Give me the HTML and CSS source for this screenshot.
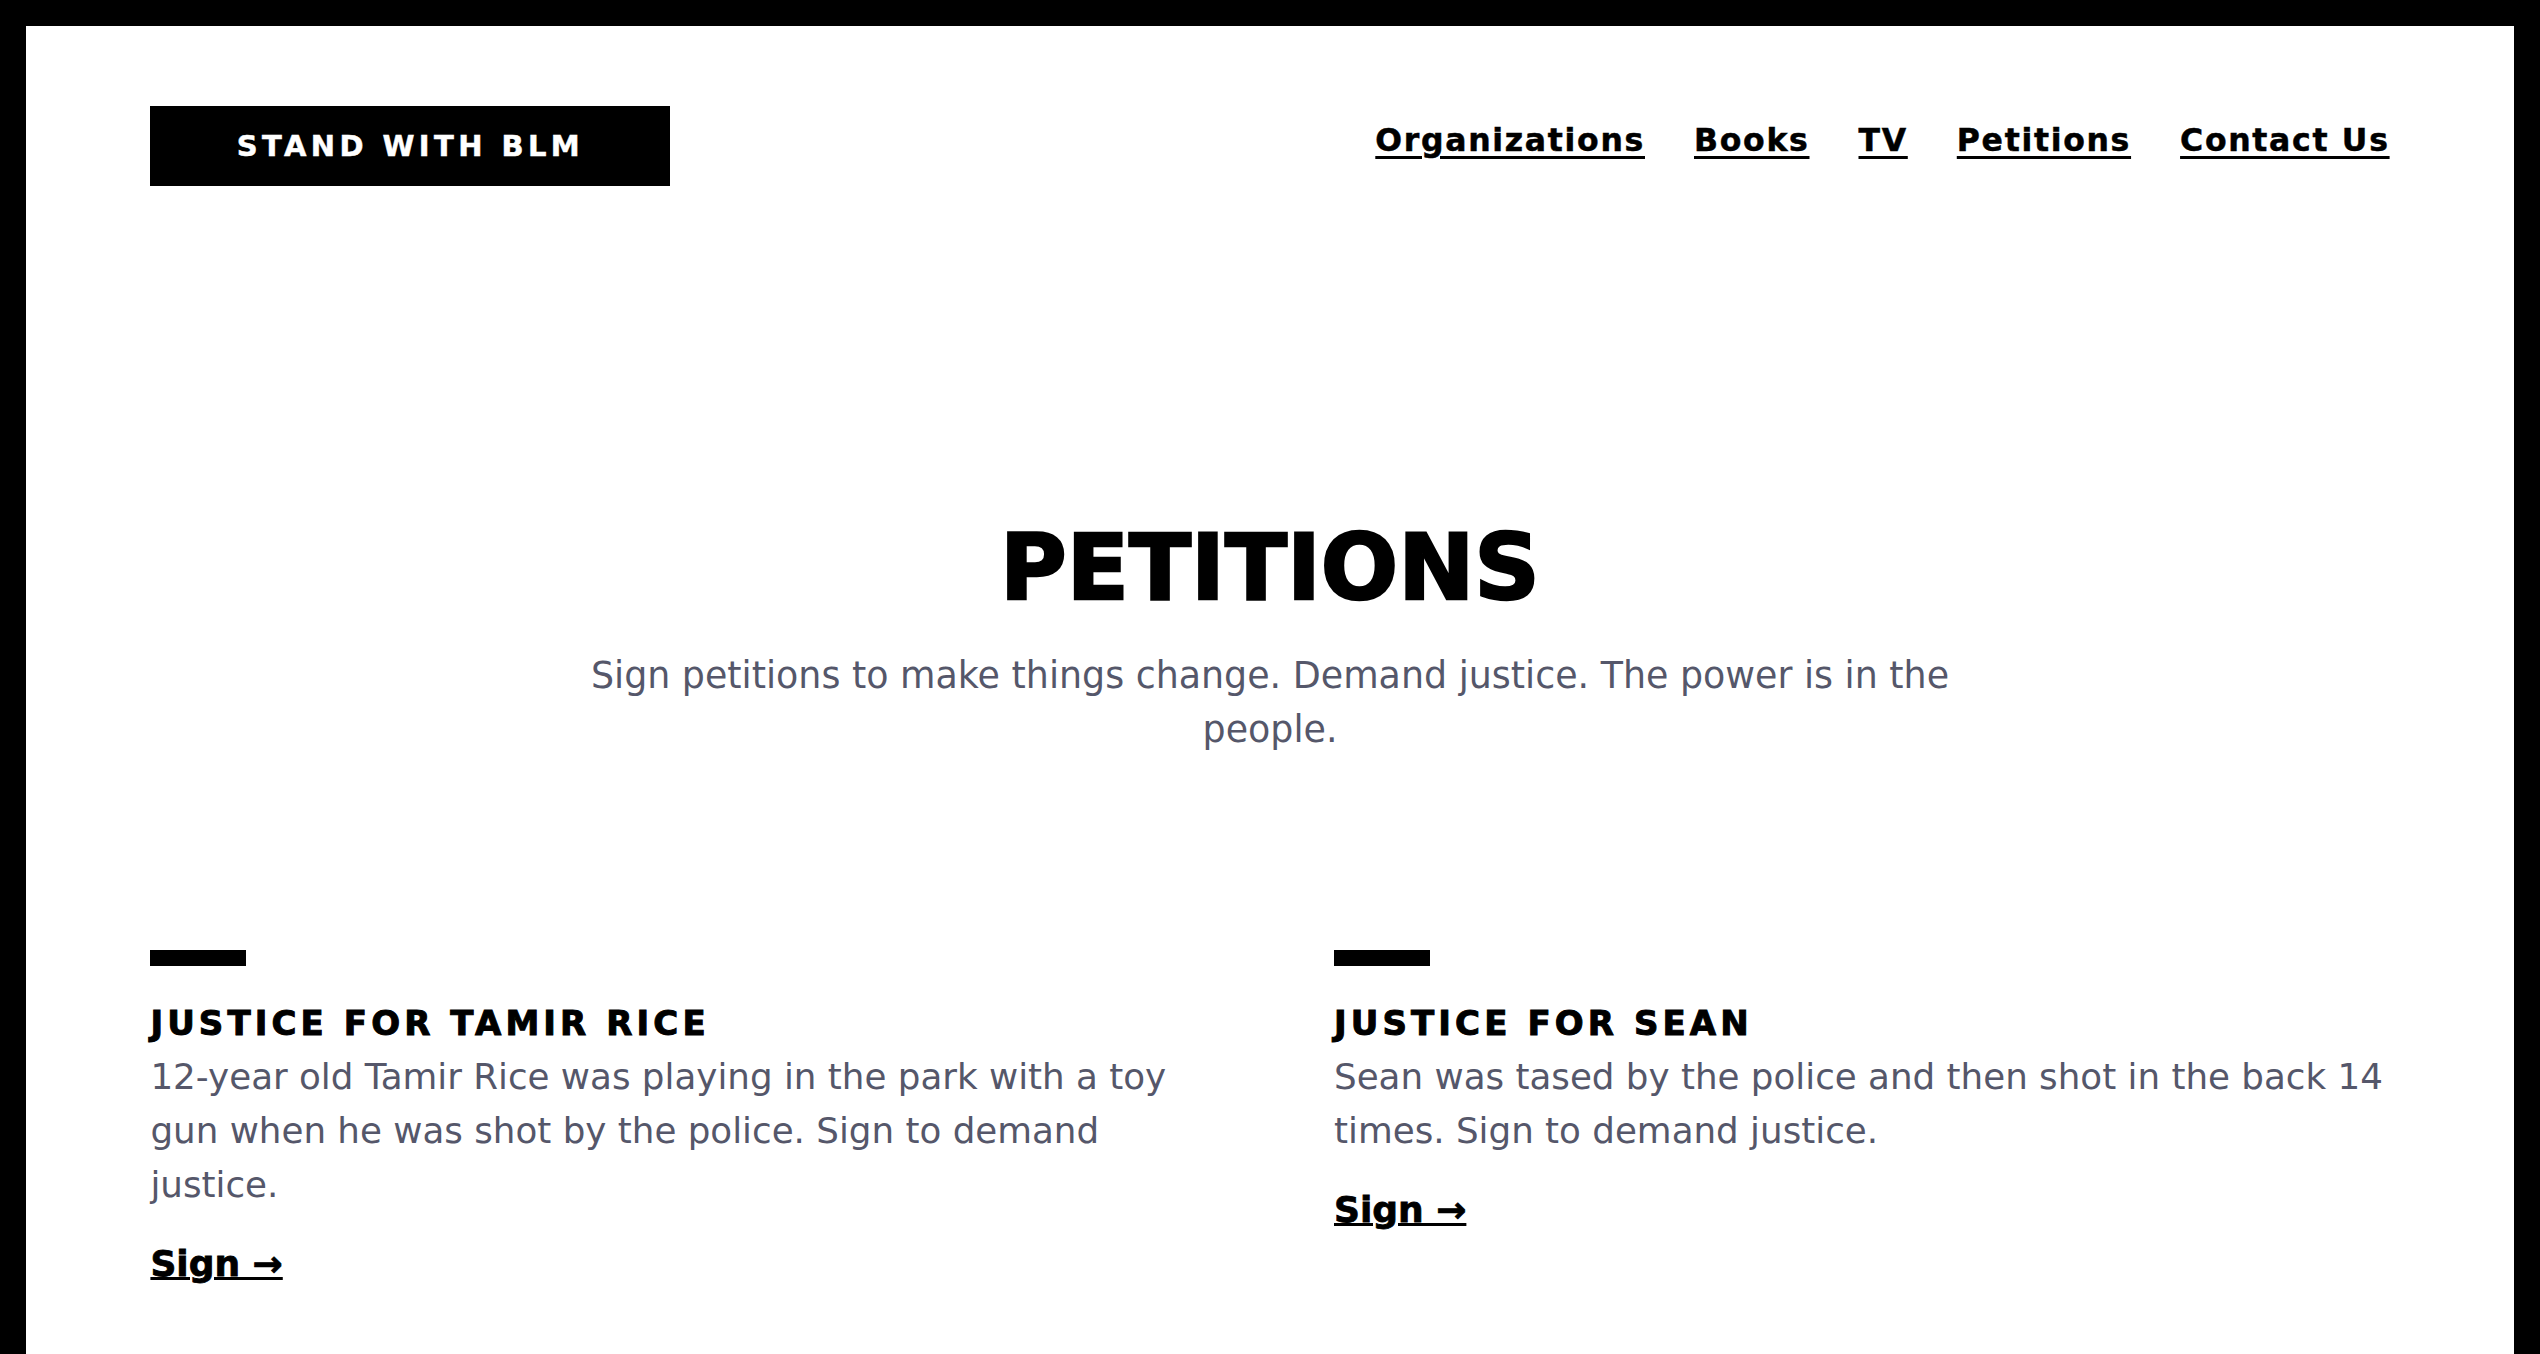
FILE: index.html
```html
<!DOCTYPE html>
<html lang="en">
<head>
<meta charset="utf-8">
<title>Petitions - Stand With BLM</title>
<link rel="stylesheet" href="styles.css">
</head>
<body>
  <div class="page">
    <header class="site-header">
      <a class="logo" href="#">STAND WITH BLM</a>
      <nav class="nav">
        <a href="#">Organizations</a>
        <a href="#">Books</a>
        <a href="#">TV</a>
        <a href="#">Petitions</a>
        <a href="#">Contact Us</a>
      </nav>
    </header>
    <main>
      <section class="hero">
        <h1 class="hero-title">PETITIONS</h1>
        <p class="hero-text">Sign petitions to make things change. Demand justice. The power is in the people.</p>
      </section>
      <section class="cards">
        <article class="card">
          <div class="card-bar"></div>
          <h2 class="card-title">JUSTICE FOR TAMIR RICE</h2>
          <p class="card-text">12-year old Tamir Rice was playing in the park with a toy gun when he was shot by the police. Sign to demand justice.</p>
          <a class="card-link" href="#">Sign →</a>
        </article>
        <article class="card">
          <div class="card-bar"></div>
          <h2 class="card-title">JUSTICE FOR SEAN</h2>
          <p class="card-text">Sean was tased by the police and then shot in the back 14 times. Sign to demand justice.</p>
          <a class="card-link" href="#">Sign →</a>
        </article>
      </section>
    </main>
  </div>
</body>
</html>
```
FILE: styles.css
```css
* { box-sizing: border-box; }
html { background: #000; }
body {
  margin: 0;
  border: 26px solid #000;
  border-bottom: 0;
  background: #fff;
  color: #000;
  font-family: "DejaVu Sans", "Liberation Sans", sans-serif;
}
.page {
  width: 90%;
  margin: 0 auto;
  padding: 80px 0 300px;
}
.site-header {
  display: flex;
  justify-content: space-between;
  align-items: flex-start;
}
.logo {
  display: flex;
  align-items: center;
  justify-content: center;
  width: 520px;
  height: 80px;
  background: #000;
  color: #fff;
  font-size: 29px;
  font-weight: 700;
  letter-spacing: 4.4px;
  text-decoration: none;
  -webkit-text-stroke: 0.5px #fff;
}
.nav {
  display: flex;
  gap: 49px;
  padding-top: 12px;
}
.nav a {
  color: #000;
  font-size: 31.5px;
  font-weight: 700;
  line-height: 45px;
  letter-spacing: 1.7px;
  text-decoration: underline;
  text-decoration-thickness: 3px;
  text-underline-offset: 5px;
  -webkit-text-stroke: 0.5px #000;
}
.hero {
  margin-top: 327px;
  text-align: center;
}
.hero-title {
  margin: 0;
  font-size: 91px;
  font-weight: 700;
  line-height: 1.2;
  -webkit-text-stroke: 2.5px #000;
}
.hero-text {
  max-width: 1420px;
  margin: 27px auto 0;
  color: #55576a;
  font-size: 36.4px;
  line-height: 54px;
}
.cards {
  display: grid;
  grid-template-columns: 1fr 1fr;
  column-gap: 128px;
  margin-top: 193px;
}
.card-bar {
  width: 96px;
  height: 16px;
  background: #000;
}
.card-title {
  margin: 30px 0 0;
  font-size: 34px;
  font-weight: 700;
  line-height: 54px;
  letter-spacing: 4.1px;
  -webkit-text-stroke: 1px #000;
}
.card-text {
  margin: 0;
  color: #55576a;
  font-size: 35.7px;
  line-height: 54px;
}
.card-link {
  display: inline-block;
  margin-top: 25px;
  color: #000;
  font-size: 36px;
  font-weight: 700;
  line-height: 54px;
  text-decoration: underline;
  text-decoration-thickness: 3px;
  text-underline-offset: 1px;
  -webkit-text-stroke: 0.8px #000;
}
```
